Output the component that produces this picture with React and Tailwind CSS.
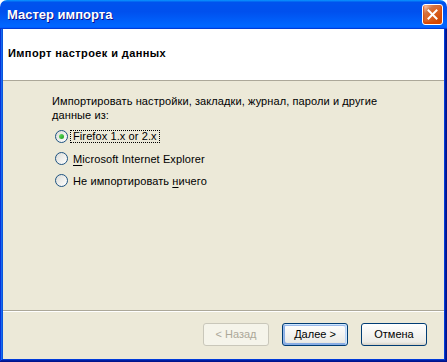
import React from "react";

const F = { fontFamily: '"Liberation Sans", Arial, sans-serif' };

function Radio({ checked }) {
  return (
    <span className="relative inline-block w-[13px] h-[13px] shrink-0 rounded-full border border-[#1d5281] bg-[linear-gradient(135deg,#dcdcd7,#ffffff)]">
      {checked && (
        <span className="absolute left-[3px] top-[3px] w-[5px] h-[5px] rounded-full bg-[linear-gradient(135deg,#6ee06a,#1a9e1a)]" />
      )}
    </span>
  );
}

function Btn({ children, disabled, primary }) {
  let cls =
    "w-[66px] h-[23px] rounded-[3px] border text-[11px] flex items-center justify-center ";
  if (disabled) {
    cls += "border-[#c9c7ba] bg-[#f5f4ea] text-[#aca899]";
  } else {
    cls +=
      "border-[#003c74] text-black bg-[linear-gradient(180deg,#ffffff,#ecebe6_86%,#d6d0c5)]";
    if (primary) {
      cls +=
        " shadow-[inset_-1px_1px_#cee7ff,inset_1px_2px_#98b8ea,inset_-2px_2px_#bcd4f6,inset_1px_-1px_#89ade4,inset_2px_-2px_#89ade4]";
    }
  }
  return (
    <div className={cls} style={F}>
      {children}
    </div>
  );
}

export default function App() {
  return (
    <div className="w-[447px] h-[362px] flex flex-col bg-white" style={F}>
      {/* Title bar */}
      <div className="h-[29px] shrink-0 rounded-t-[7px] flex items-center justify-between pl-[7px] pr-[4px] bg-[linear-gradient(180deg,#0997ff,#0053ee_8%,#0050ee_40%,#0066ff_88%,#0066ff_93%,#005bff_95%,#003dd7_96%,#003dd7)]">
        <span
          className="text-white font-bold text-[13px] [text-shadow:1px_1px_#0f1089]"
          style={F}
        >
          Мастер импорта
        </span>
        <div className="w-[21px] h-[21px] rounded-[3px] border border-white flex items-center justify-center bg-[radial-gradient(circle_at_90%_90%,#cc4600_0%,#dc6527_55%,#cd7546_70%,#ffccb2_90%,#ffffff_100%)] shadow-[inset_0_-1px_2px_1px_#da4600]">
          <svg width="11" height="11" viewBox="0 0 11 11">
            <path d="M1.5 1.5 L9.5 9.5 M9.5 1.5 L1.5 9.5" stroke="white" strokeWidth="2" strokeLinecap="square" />
          </svg>
        </div>
      </div>

      {/* Body with frame */}
      <div className="flex-1 flex flex-col px-[3px] pb-[3px] bg-[#0831d9] shadow-[inset_-1px_-1px_#00138c,inset_1px_0_#0831d9,inset_-2px_-2px_#001ea0,inset_2px_0_#166aee,inset_-3px_-3px_#003bda,inset_3px_0_#0855dd]">
        <div className="flex-1 flex flex-col bg-[#ece9d8]">
          {/* Header */}
          <div className="h-[52px] shrink-0 bg-white border-b border-[#aca899] flex items-center pl-[5px] pb-[2px]">
            <span className="font-bold text-[11px] text-black tracking-[0.4px]" style={F}>
              Импорт настроек и данных
            </span>
          </div>

          {/* Content */}
          <div className="flex-1 pl-[49px] pt-[13px] text-[11px] text-black leading-[14px] tracking-[0.1px]">
            <div>
              Импортировать настройки, закладки, журнал, пароли и другие
              <br />
              данные из:
            </div>
            <div className="mt-[8px] flex flex-col gap-[9px] pl-[3px]">
              <div className="flex items-center h-[13px]">
                <Radio checked />
                <span className="ml-[3px] px-[2px] outline outline-1 outline-dotted outline-black leading-[11px] py-[0px]">
                  Firefox 1.x or 2.x
                </span>
              </div>
              <div className="flex items-center h-[13px]">
                <Radio />
                <span className="ml-[5px]">
                  <span className="underline underline-offset-2">M</span>icrosoft Internet Explorer
                </span>
              </div>
              <div className="flex items-center h-[13px]">
                <Radio />
                <span className="ml-[5px]">
                  Не импортировать <span className="underline underline-offset-2">н</span>ичего
                </span>
              </div>
            </div>
          </div>

          {/* Footer */}
          <div className="h-[49px] shrink-0 border-t border-[#aca899] shadow-[inset_0_1px_#ffffff] flex items-start justify-end pr-[17px] pt-[12px] gap-[13px]">
            <Btn disabled>&lt; Назад</Btn>
            <Btn primary>Далее &gt;</Btn>
            <Btn>Отмена</Btn>
          </div>
        </div>
      </div>
    </div>
  );
}
